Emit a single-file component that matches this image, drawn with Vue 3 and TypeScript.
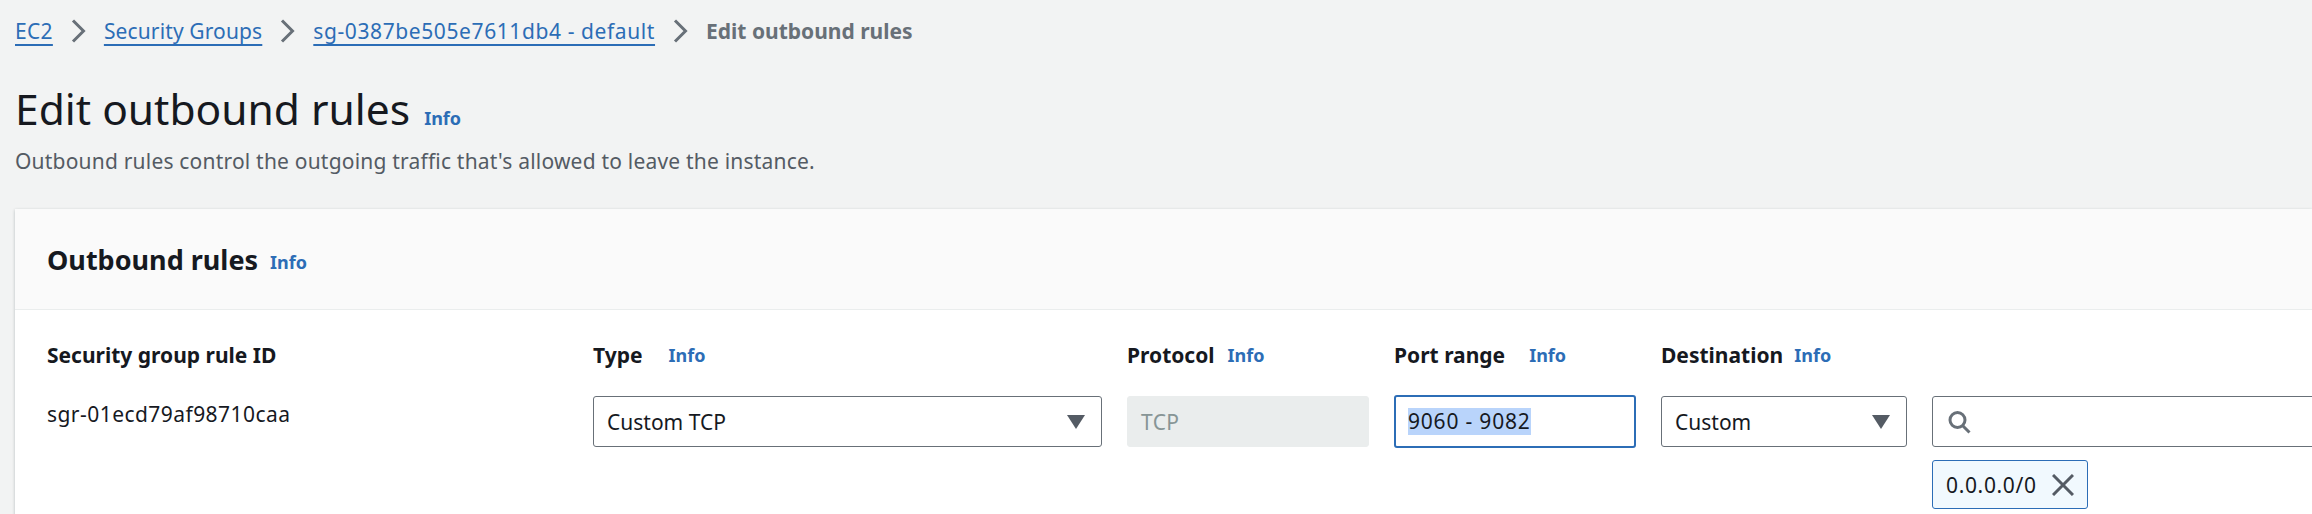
<script setup lang="ts">
interface Col { label: string; gap: number }
const cols: Col[] = [
  { label: 'Security group rule ID', gap: 0 },
  { label: 'Type', gap: 26 },
  { label: 'Protocol', gap: 13 },
  { label: 'Port range', gap: 24 },
  { label: 'Destination', gap: 11 },
]
const crumbs = [
  { text: 'EC2', spacing: 0.3 },
  { text: 'Security Groups', spacing: 0.13 },
  { text: 'sg-0387be505e7611db4 - default', spacing: 0.6 },
]
</script>

<template>
  <div class="page">
    <nav class="crumbs">
      <template v-for="c in crumbs" :key="c.text">
        <a class="crumb" :style="{ letterSpacing: c.spacing + 'px' }">{{ c.text }}</a>
        <svg class="sep" width="15" height="24" viewBox="0 0 15 24"><path d="M2 1.5l10.5 10.5L2 22.5" fill="none" stroke="#687078" stroke-width="3"/></svg>
      </template>
      <span class="current">Edit outbound rules</span>
    </nav>
    <div class="title-row">
      <h1>Edit outbound rules</h1>
      <a class="info">Info</a>
    </div>
    <p class="desc">Outbound rules control the outgoing traffic that's allowed to leave the instance.</p>
    <section class="card">
      <header class="card-head">
        <h2>Outbound rules</h2>
        <a class="info head-info">Info</a>
      </header>
      <div class="grid">
        <div v-for="c in cols" :key="c.label" class="th">
          <span>{{ c.label }}</span>
          <a v-if="c.gap" class="info" :style="{ marginLeft: c.gap + 'px' }">Info</a>
        </div>
        <div class="th"></div>

        <div class="rule-id">sgr-01ecd79af98710caa</div>
        <div class="box select">
          <span>Custom TCP</span>
          <i class="caret"></i>
        </div>
        <div class="box disabled">TCP</div>
        <div class="box focus"><span class="sel">9060 - 9082</span></div>
        <div class="box select">
          <span>Custom</span>
          <i class="caret"></i>
        </div>
        <div class="search-cell">
          <div class="box search">
            <svg width="24" height="24" viewBox="0 0 24 24"><circle cx="10.5" cy="10" r="7.5" fill="none" stroke="#687078" stroke-width="3"/><path d="M15.5 15.5l7 7" stroke="#687078" stroke-width="3"/></svg>
          </div>
          <div class="chip">
            <span class="chip-text">0.0.0.0/0</span>
            <svg width="22" height="22" viewBox="0 0 22 22"><path d="M1 1l20 20M21 1L1 21" stroke="#545b64" stroke-width="3"/></svg>
          </div>
        </div>
      </div>
    </section>
  </div>
</template>

<style>
html, body { margin: 0; background: #f2f3f3; }
</style>

<style scoped>
.page {
  width: 2312px;
  height: 514px;
  overflow: hidden;
  box-sizing: border-box;
  padding: 16px 0 0 15px;
  background: #f2f3f3;
  color: #16191f;
  font-family: "Noto Sans", sans-serif;
  font-size: 21px;
}
.crumbs { display: flex; align-items: center; gap: 18px; height: 30px; }
.crumb { color: #2c6db6; text-decoration: underline; text-decoration-thickness: 2px; text-underline-offset: 5px; font-size: 21px; }
.sep { flex: none; }
.current { color: #687078; font-weight: 700; font-size: 21px; }
.title-row { display: flex; align-items: baseline; gap: 14px; margin-top: 35px; }
h1 { margin: 0; font-size: 42.5px; line-height: 56px; font-weight: 400; }
.info { color: #2c6db6; font-size: 18px; font-weight: 700; }
.head-info { margin-top: 6px; }
.desc { margin: 9px 0 0; color: #545b64; font-size: 21px; line-height: 30px; letter-spacing: .2px; }
.card {
  margin-top: 33px;
  background: #fff;
  height: 320px;
  box-shadow: 0 1px 3px rgba(0, 28, 36, .25);
}
.card-head {
  box-sizing: border-box;
  height: 101px;
  padding-left: 32px;
  display: flex;
  align-items: center;
  gap: 12px;
  background: #fafafa;
  border-bottom: 1px solid #eaeded;
}
h2 { margin: 0; font-size: 27px; font-weight: 700; }
.grid {
  display: grid;
  grid-template-columns: 521px 509px 242px 242px 246px 400px;
  column-gap: 25px;
  padding: 29px 0 0 32px;
  grid-template-rows: 32px auto;
  row-gap: 25px;
}
.th { font-weight: 700; display: flex; align-items: center; white-space: nowrap; }
.rule-id { padding-top: 4px; letter-spacing: .45px; }
.box {
  box-sizing: border-box;
  height: 51px;
  border: 1px solid #687078;
  border-radius: 3px;
  background: #fff;
  display: flex;
  align-items: center;
  padding: 0 13px;
}
.select { justify-content: space-between; }
.caret { border: 9px solid transparent; border-top: 14px solid #545b64; border-bottom: 0; margin-right: 3px; }
.disabled { background: #eaeded; border-color: #eaeded; color: #879596; letter-spacing: .4px; }
.focus { border: 2px solid #2c6db6; margin: -1px 0; height: 53px; padding: 0 12px; }
.sel { background: #b9d4fb; line-height: 27px; letter-spacing: .8px; }
.search-cell { display: flex; flex-direction: column; gap: 13px; align-items: flex-start; }
.search { width: 400px; padding-left: 14px; }
.chip {
  box-sizing: border-box;
  height: 49px;
  width: 156px;
  border: 1px solid #2c6db6;
  border-radius: 3px;
  background: #f1f9fe;
  display: flex;
  align-items: center;
  justify-content: space-between;
  padding: 0 13px;
}
.chip-text { letter-spacing: .65px; }
</style>
